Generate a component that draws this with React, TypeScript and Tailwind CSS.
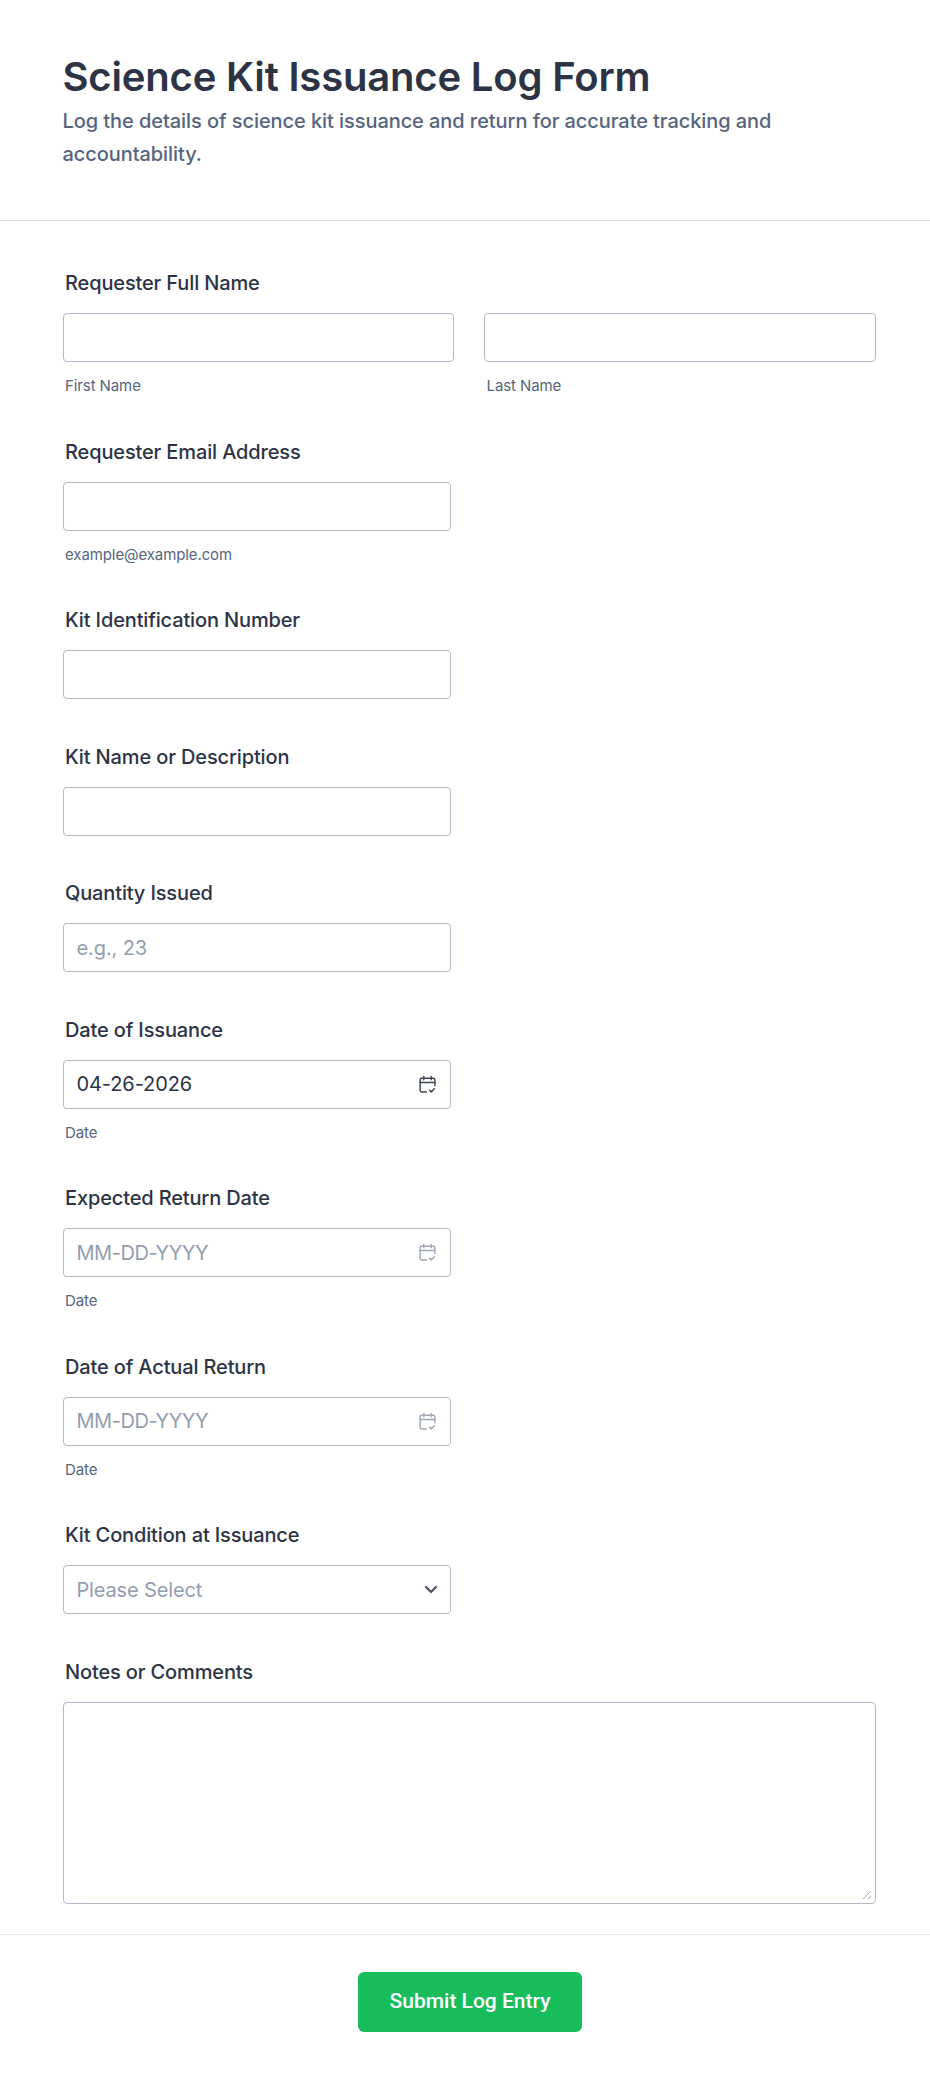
import React from "react";

const inputBox = "h-[49px] rounded-[4px] border border-[#b4b9c7] bg-white";

function CalendarIcon({ muted }: { muted?: boolean }) {
  return (
    <svg width="19" height="19" viewBox="0 0 18 18" fill="none" stroke={muted ? "#a0a8b8" : "#3e4656"} strokeWidth="1.4" strokeLinecap="round" strokeLinejoin="round" className="shrink-0">
      <path d="M8 16H3.5A1.5 1.5 0 0 1 2 14.5V4.5A1.5 1.5 0 0 1 3.5 3h11A1.5 1.5 0 0 1 16 4.5V10" />
      <path d="M2 7h14" />
      <path d="M5.5 1.5v3M12.5 1.5v3" />
      <path d="M11 14.5l1.5 1.5 3-3" />
    </svg>
  );
}

function Label({ children }: { children: React.ReactNode }) {
  return <div className="pl-[2.5px] text-[20px] leading-[24px] font-medium tracking-[-0.14px] text-[#2c3345] -translate-y-px">{children}</div>;
}

function Sub({ children }: { children: React.ReactNode }) {
  return <div className="mt-[14px] pl-[2.5px] text-[15px] leading-[18px] tracking-[-0.1px] text-[#57647e] translate-y-px">{children}</div>;
}

function TextField({ label, placeholder, sub }: { label: string; placeholder?: string; sub?: string }) {
  return (
    <div className="flex flex-col">
      <Label>{label}</Label>
      <div className={`mt-[17px] w-[388.5px] flex items-center px-[13px] text-[20px] tracking-[-0.1px] text-[#929db1] ${inputBox}`}>{placeholder}</div>
      {sub && <Sub>{sub}</Sub>}
    </div>
  );
}

function DateField({ label, value }: { label: string; value?: string }) {
  return (
    <div className="flex flex-col">
      <Label>{label}</Label>
      <div className={`mt-[17px] w-[388.5px] flex items-center justify-between pl-[13px] pr-[13px] text-[20px] ${value ? "tracking-[-0.1px] text-[#2c3345]" : "tracking-[-0.45px] text-[#929db1]"} ${inputBox}`}>
        <span>{value ?? "MM-DD-YYYY"}</span>
        <CalendarIcon muted={!value} />
      </div>
      <Sub>Date</Sub>
    </div>
  );
}

export default function App() {
  return (
    <div className="min-h-[2081px] bg-white font-['Inter',sans-serif]">
      <header className="h-[221px] border-b border-[#d8dae3] pl-[62.5px] pr-[62px] pt-[53px]">
        <h1 className="text-[40px] leading-[48px] font-semibold tracking-[-0.18px] text-[#2c3345]">Science Kit Issuance Log Form</h1>
        <p className="mt-[4px] max-w-[760px] text-[20px] leading-[33px] font-medium tracking-[-0.07px] text-[#57647e]">
          Log the details of science kit issuance and return for accurate tracking and accountability.
        </p>
      </header>
      <main className="flex flex-col gap-[46.5px] pl-[62.5px] pr-[54px] pt-[51px]">
        <div className="flex flex-col">
          <Label>Requester Full Name</Label>
          <div className="mt-[17px] grid grid-cols-[391.5px_392px] gap-x-[30px]">
            <div className={inputBox} />
            <div className={inputBox} />
            <Sub>First Name</Sub>
            <Sub>Last Name</Sub>
          </div>
        </div>
        <TextField label="Requester Email Address" sub="example@example.com" />
        <TextField label="Kit Identification Number" />
        <TextField label="Kit Name or Description" />
        <TextField label="Quantity Issued" placeholder="e.g., 23" />
        <DateField label="Date of Issuance" value="04-26-2026" />
        <DateField label="Expected Return Date" />
        <DateField label="Date of Actual Return" />
        <div className="flex flex-col">
          <Label>Kit Condition at Issuance</Label>
          <div className={`mt-[17px] w-[388.5px] flex items-center justify-between pl-[13px] pr-[12px] text-[20px] tracking-[-0.15px] text-[#929db1] ${inputBox}`}>
            <span>Please Select</span>
            <svg width="14" height="9" viewBox="0 0 14 9" fill="none" stroke="#4b5468" strokeWidth="2.2" strokeLinecap="round" strokeLinejoin="round">
              <path d="M2 2l5 5 5-5" />
            </svg>
          </div>
        </div>
        <div className="flex flex-col">
          <Label>Notes or Comments</Label>
          <div className="relative mt-[17px] h-[202px] w-[813.5px] rounded-[4px] border border-[#b4b9c7] bg-white">
            <svg width="10" height="10" viewBox="0 0 10 10" className="absolute right-[3px] bottom-[3px]" stroke="#a3a8b3" strokeWidth="1">
              <path d="M1 9L9 1M6 9l3-3" />
            </svg>
          </div>
        </div>
      </main>
      <footer className="mt-[30px] flex justify-center border-t border-[#e3e6ef] pt-[37px] pl-[10px]">
        <div className="flex h-[60px] w-[224px] items-center justify-center rounded-[6px] bg-[#18bd5b] pt-[1px] text-[21px] font-medium text-white font-['Roboto',sans-serif]">
          Submit Log Entry
        </div>
      </footer>
    </div>
  );
}
